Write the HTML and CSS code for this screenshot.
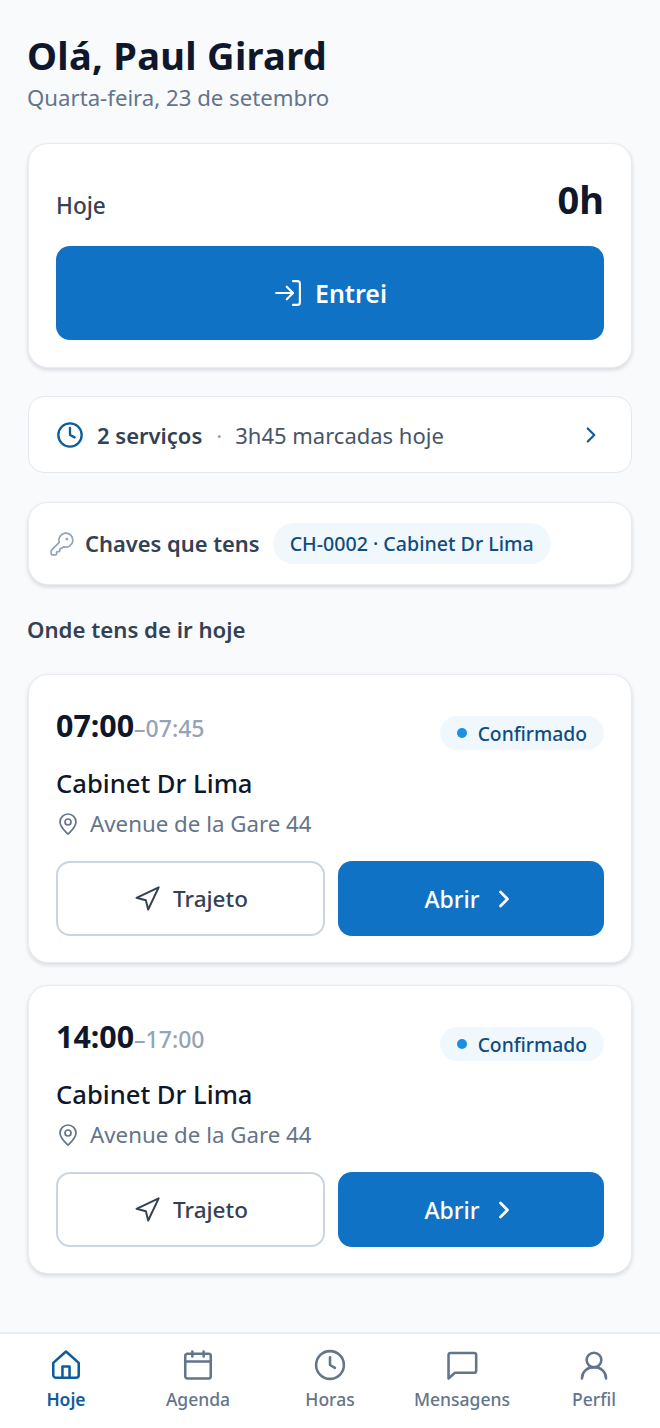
FILE: index.html
```html
<!DOCTYPE html>
<html lang="pt">
<head>
<meta charset="UTF-8">
<meta name="viewport" content="width=device-width, initial-scale=1.0">
<title>Hoje</title>
<link rel="stylesheet" href="styles.css">
</head>
<body>
<div class="app">
  <main class="content">
    <header class="greeting">
      <h1>Olá, Paul Girard</h1>
      <p>Quarta-feira, 23 de setembro</p>
    </header>

    <section class="card today">
      <div class="today-head">
        <span class="today-label">Hoje</span>
        <span class="today-total">0h</span>
      </div>
      <button class="btn btn-primary btn-checkin">
        <svg width="30" height="30" viewBox="0 0 24 24" fill="none" stroke="currentColor" stroke-width="1.7" stroke-linecap="round" stroke-linejoin="round"><path d="M16 2.500h3.500a2 2 0 0 1 2 2v15a2 2 0 0 1-2 2H16"/><path d="M2.500 12h13.500"/><path d="M11 7l5 5-5 5"/></svg>
        Entrei
      </button>
    </section>

    <a class="summary">
      <svg class="summary-icon" width="28" height="28" viewBox="0 0 24 24" fill="none" stroke="currentColor" stroke-width="2" stroke-linecap="round" stroke-linejoin="round"><circle cx="12" cy="12" r="10"/><path d="M12 6v6l4 2"/></svg>
      <strong>2 serviços</strong>
      <span class="dot-sep">·</span>
      <span class="summary-text">3h45 marcadas hoje</span>
      <svg class="summary-arrow" width="26" height="26" viewBox="0 0 24 24" fill="none" stroke="currentColor" stroke-width="2" stroke-linecap="round" stroke-linejoin="round"><path d="M9 6l6 6-6 6"/></svg>
    </a>

    <section class="card keys">
      <svg class="keys-icon" width="26" height="26" viewBox="0 0 24 24" fill="none" stroke="currentColor" stroke-width="1.6" stroke-linecap="round" stroke-linejoin="round"><path d="M2.586 17.414A2 2 0 0 0 2 18.828V21a1 1 0 0 0 1 1h3a1 1 0 0 0 1-1v-1a1 1 0 0 1 1-1h1a1 1 0 0 0 1-1v-1a1 1 0 0 1 1-1h.172a2 2 0 0 0 1.414-.586l.814-.814a6.500 6.500 0 1 0-4-4z"/><circle cx="16.500" cy="7.500" r=".5" fill="currentColor"/></svg>
      <span class="keys-label">Chaves que tens</span>
      <span class="chip">CH-0002 · Cabinet Dr Lima</span>
    </section>

    <h2 class="section-title">Onde tens de ir hoje</h2>

    <article class="card job">
      <div class="job-head">
        <div class="job-time"><b>07:00</b><span>–07:45</span></div>
        <span class="status"><i></i>Confirmado</span>
      </div>
      <h3>Cabinet Dr Lima</h3>
      <p class="job-address">
        <svg width="24" height="24" viewBox="0 0 24 24" fill="none" stroke="currentColor" stroke-width="1.7" stroke-linecap="round" stroke-linejoin="round"><path d="M20 10c0 5-5.500 9.500-7.400 11.600a.8.8 0 0 1-1.200 0C9.500 19.500 4 15 4 10a8 8 0 0 1 16 0z"/><circle cx="12" cy="10" r="3"/></svg>
        Avenue de la Gare 44
      </p>
      <div class="job-actions">
        <button class="btn btn-outline">
          <svg width="28" height="28" viewBox="0 0 24 24" fill="none" stroke="currentColor" stroke-width="1.7" stroke-linecap="round" stroke-linejoin="round"><path d="M3 11l19-9-9 19-2-8z"/></svg>
          Trajeto
        </button>
        <button class="btn btn-primary">
          Abrir
          <svg width="28" height="28" viewBox="0 0 24 24" fill="none" stroke="currentColor" stroke-width="2.400" stroke-linecap="round" stroke-linejoin="round"><path d="M9 6l6 6-6 6"/></svg>
        </button>
      </div>
    </article>

    <article class="card job">
      <div class="job-head">
        <div class="job-time"><b>14:00</b><span>–17:00</span></div>
        <span class="status"><i></i>Confirmado</span>
      </div>
      <h3>Cabinet Dr Lima</h3>
      <p class="job-address">
        <svg width="24" height="24" viewBox="0 0 24 24" fill="none" stroke="currentColor" stroke-width="1.7" stroke-linecap="round" stroke-linejoin="round"><path d="M20 10c0 5-5.500 9.500-7.400 11.600a.8.8 0 0 1-1.200 0C9.500 19.500 4 15 4 10a8 8 0 0 1 16 0z"/><circle cx="12" cy="10" r="3"/></svg>
        Avenue de la Gare 44
      </p>
      <div class="job-actions">
        <button class="btn btn-outline">
          <svg width="28" height="28" viewBox="0 0 24 24" fill="none" stroke="currentColor" stroke-width="1.7" stroke-linecap="round" stroke-linejoin="round"><path d="M3 11l19-9-9 19-2-8z"/></svg>
          Trajeto
        </button>
        <button class="btn btn-primary">
          Abrir
          <svg width="28" height="28" viewBox="0 0 24 24" fill="none" stroke="currentColor" stroke-width="2.400" stroke-linecap="round" stroke-linejoin="round"><path d="M9 6l6 6-6 6"/></svg>
        </button>
      </div>
    </article>
  </main>

  <nav class="tabbar">
    <a class="tab tab-active">
      <svg width="34" height="34" viewBox="0 0 24 24" fill="none" stroke="currentColor" stroke-width="1.800" stroke-linecap="round" stroke-linejoin="round"><path d="M3 10.500L12 2.500l9 8V19a2 2 0 0 1-2 2H5a2 2 0 0 1-2-2z"/><path d="M9.500 21v-8h5v8"/></svg>
      Hoje
    </a>
    <a class="tab">
      <svg width="34" height="34" viewBox="0 0 24 24" fill="none" stroke="currentColor" stroke-width="1.800" stroke-linecap="round" stroke-linejoin="round"><rect x="3" y="4" width="18" height="17.500" rx="1.500"/><path d="M3 9.500h18"/><path d="M8 2.500V6"/><path d="M16 2.500V6"/></svg>
      Agenda
    </a>
    <a class="tab">
      <svg width="34" height="34" viewBox="0 0 24 24" fill="none" stroke="currentColor" stroke-width="1.800" stroke-linecap="round" stroke-linejoin="round"><circle cx="12" cy="12" r="9.800"/><path d="M12 6.500V12l3.500 2"/></svg>
      Horas
    </a>
    <a class="tab">
      <svg width="34" height="34" viewBox="0 0 24 24" fill="none" stroke="currentColor" stroke-width="1.800" stroke-linecap="round" stroke-linejoin="round"><path d="M22 16a1.500 1.500 0 0 1-1.500 1.500H7L2.500 21.500V5A1.500 1.500 0 0 1 4 3.500h16.500A1.500 1.500 0 0 1 22 5z"/></svg>
      Mensagens
    </a>
    <a class="tab">
      <svg width="34" height="34" viewBox="0 0 24 24" fill="none" stroke="currentColor" stroke-width="1.800" stroke-linecap="round" stroke-linejoin="round"><circle cx="12" cy="8.500" r="5.200"/><path d="M3.500 21.500c0-4.500 3.500-8 8.500-8s8.500 3.500 8.500 8"/></svg>
      Perfil
    </a>
  </nav>
</div>
</body>
</html>
```

FILE: styles.css
```css
* {
  box-sizing: border-box;
}
html, body {
  margin: 0;
  padding: 0;
}
body {
  font-family: "Noto Sans", Arial, sans-serif;
  background: #f8fafc;
  color: #0f172a;
}
h1, h2, h3, p {
  margin: 0;
}
.app {
  height: 1428px;
  display: flex;
  flex-direction: column;
}
.content {
  flex: 1;
  padding: 30px 28px 0;
}
.greeting h1 {
  font-size: 38px;
  line-height: 50px;
  font-weight: 700;
  letter-spacing: 0.3px;
  margin-left: -1px;
}
.greeting p {
  font-size: 22.2px;
  line-height: 30px;
  color: #64748b;
  margin: 3px 0 0 -1px;
}
.card {
  background: #fff;
  border: 1px solid #e8ebf0;
  border-radius: 20px;
  box-shadow: 0 2px 4px rgba(15, 23, 42, 0.14);
}
.today {
  margin-top: 30px;
  padding: 27px;
  height: 225px;
}
.today-head {
  display: flex;
  justify-content: space-between;
  align-items: baseline;
  padding-top: 3px;
}
.today-label {
  font-size: 22.6px;
  line-height: 32px;
  font-weight: 500;
  color: #334155;
}
.today-total {
  font-size: 38px;
  line-height: 50px;
  font-weight: 700;
}
.btn {
  display: flex;
  align-items: center;
  justify-content: center;
  font-family: inherit;
  border-radius: 14px;
  cursor: pointer;
}
.btn-primary {
  background: #0f72c5;
  color: #fff;
  border: 0;
  font-size: 23px;
  font-weight: 500;
  gap: 10px;
}
.btn-outline {
  background: #fff;
  color: #334155;
  border: 2px solid #cbd5e1;
  font-size: 22.5px;
  font-weight: 500;
  gap: 12px;
}
.btn-checkin {
  width: 100%;
  height: 94px;
  margin-top: 22px;
  font-size: 25px;
  font-weight: 600;
  gap: 12px;
}
.summary {
  display: flex;
  align-items: center;
  height: 77px;
  margin-top: 28px;
  padding: 0 27px;
  background: #fff;
  border: 1px solid #e2e8f0;
  border-radius: 16px;
  font-size: 22px;
  color: #475569;
}
.summary-icon {
  color: #0f5c9c;
  margin-right: 13px;
}
.summary strong {
  color: #334155;
  font-weight: 600;
}
.dot-sep {
  margin: 0 13px 0 14px;
  color: #94a3b8;
}
.summary-arrow {
  color: #0f5c9c;
  margin-left: auto;
}
.keys {
  display: flex;
  align-items: center;
  height: 83px;
  margin-top: 29px;
  padding: 0 20px;
}
.keys-icon {
  color: #94a3b8;
  margin-right: 10px;
}
.keys-label {
  font-size: 21.9px;
  font-weight: 600;
  color: #334155;
}
.chip {
  margin-left: 13px;
  padding: 0 17px;
  height: 41px;
  line-height: 41px;
  border-radius: 21px;
  background: #f0f8fe;
  color: #0f4c81;
  font-size: 19.6px;
  font-weight: 500;
}
.section-title {
  margin: 28px 0 0 -1px;
  font-size: 22.2px;
  line-height: 34px;
  font-weight: 600;
  color: #334155;
}
.job {
  height: 289px;
  margin-top: 27px;
  padding: 28px 27px;
}
.job + .job {
  margin-top: 22px;
}
.job-head {
  display: flex;
  justify-content: space-between;
  align-items: flex-start;
  height: 50px;
}
.job-time {
  line-height: 46px;
}
.job-time b {
  font-size: 30.4px;
  font-weight: 700;
}
.job-time span {
  font-size: 23px;
  font-weight: 500;
  color: #94a3b8;
}
.status {
  display: flex;
  align-items: center;
  height: 34px;
  margin-top: 13px;
  padding: 0 17px;
  border-radius: 17px;
  background: #f0f8fe;
  color: #0f4c81;
  font-size: 19.3px;
  font-weight: 500;
}
.status i {
  width: 10px;
  height: 10px;
  margin-right: 11px;
  border-radius: 50%;
  background: #1a8fe3;
}
.job h3 {
  margin-top: 13px;
  font-size: 25.6px;
  line-height: 36px;
  font-weight: 500;
}
.job-address {
  display: flex;
  align-items: center;
  gap: 10px;
  margin-top: 6px;
  font-size: 22.3px;
  line-height: 32px;
  color: #64748b;
}
.job-actions {
  display: grid;
  grid-template-columns: 269px 266px;
  gap: 13px;
  margin-top: 21px;
}
.job-actions .btn {
  height: 75px;
}
.tabbar {
  display: grid;
  grid-template-columns: repeat(5, 132px);
  height: 96px;
  background: #fff;
  border-top: 2px solid #e8ebf0;
}
.tab {
  display: flex;
  flex-direction: column;
  align-items: center;
  padding-top: 14px;
  font-size: 17.5px;
  line-height: 24px;
  font-weight: 500;
  color: #64748b;
}
.tab svg {
  margin-bottom: 5px;
}
.tab-active {
  color: #0f5c9c;
  font-weight: 600;
}
```
